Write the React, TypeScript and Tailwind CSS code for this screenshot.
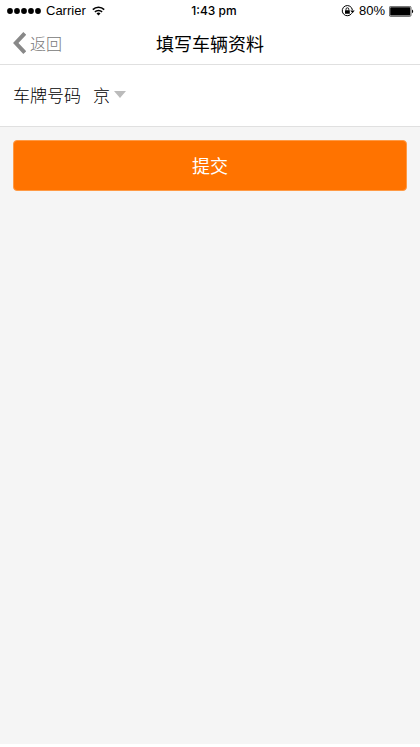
import { useState, type FormEvent } from "react";

const provinces = ["京", "津", "沪", "渝", "冀", "豫", "粤", "苏", "浙"];

const StatusBar = () => {
  return (
    <div className="grid h-[22px] grid-cols-3 items-center px-1.5 font-['Liberation_Sans',sans-serif] text-[13px] text-black">
      <div className="flex items-center">
        <svg width="36" height="8" viewBox="0 0 36 8" aria-hidden="true">
          {[4, 11, 18, 25, 32].map((cx) => (
            <circle key={cx} cx={cx} cy="4" r="2.9" />
          ))}
        </svg>
        <span className="ml-1">Carrier</span>
        <svg className="ml-1.5" width="13" height="10" viewBox="0 0 13 10" fill="none" stroke="#000" aria-hidden="true">
          <path d="M.8 3.6a8.1 8.1 0 0 1 11.4 0" strokeWidth="1.6" />
          <path d="M2.9 5.9a5.1 5.1 0 0 1 7.2 0" strokeWidth="1.5" />
          <path d="M6.5 9.6 4.5 7.5a2.9 2.9 0 0 1 4 0z" fill="#000" stroke="none" />
        </svg>
      </div>

      <span className="pl-2 text-center font-['Inter',sans-serif] text-xs font-medium">1:43 pm</span>

      <div className="flex items-center justify-end">
        <svg width="14" height="12" viewBox="0 0 14 12" fill="none" stroke="#000" aria-hidden="true">
          <path d="M10.7 8.3A5.1 5.1 0 1 1 11.4 5" strokeWidth="1" />
          <path d="M9.3 5.6h4.4l-2.2 2.7z" fill="#000" stroke="none" />
          <rect x="4" y="5.2" width="4.8" height="3.6" rx=".4" fill="#000" stroke="none" />
          <path d="M5 5.4V4.2a1.4 1.4 0 0 1 2.8 0v1.2" strokeWidth=".9" />
        </svg>
        <span className="ml-1">80%</span>
        <svg className="ml-1" width="25" height="11" viewBox="0 0 25 11" aria-hidden="true">
          <rect x=".4" y=".4" width="21.6" height="10" rx="1.2" fill="none" stroke="#000" strokeWidth=".6" />
          <rect x="1.2" y="1.2" width="20" height="8.4" rx=".6" />
          <path d="M23 3.6c1.6.4 1.6 3.2 0 3.6z" />
        </svg>
      </div>
    </div>
  );
};

const Header = () => {
  return (
    <header className="grid h-[43px] grid-cols-[1fr_auto_1fr] items-center border-b border-[#e0e0e0] px-[13px]">
      <button type="button" className="flex items-center gap-1 text-base font-light text-[#777]">
        <svg width="13" height="22" viewBox="0 0 13 22" fill="none" stroke="#888" strokeWidth="4" aria-hidden="true">
          <path d="M11.8 1.4 2.8 11l9 9.6" />
        </svg>
        返回
      </button>
      <h1 className="text-lg font-normal text-black">填写车辆资料</h1>
    </header>
  );
};

const App = () => {
  const [province, setProvince] = useState("京");

  const handleSubmit = (e: FormEvent) => {
    e.preventDefault();
  };

  return (
    <div className="bg-white pb-[3px] font-['Noto_Sans_CJK_SC',sans-serif]">
      <div className="flex min-h-[calc(100vh-3px)] flex-col bg-[#f5f5f5]">
        <div className="bg-white">
          <StatusBar />
          <Header />
        </div>

        <form onSubmit={handleSubmit}>
          <div className="flex h-[62px] items-center gap-3 border-b border-[#e0e0e0] bg-white px-[13px] pb-0.5 text-[17px] text-black">
            <label htmlFor="province" className="font-light">
              车牌号码
            </label>
            <div className="relative flex items-center">
              <select
                id="province"
                value={province}
                onChange={(e) => setProvince(e.target.value)}
                className="appearance-none bg-transparent pr-5 font-light outline-none"
              >
                {provinces.map((name) => (
                  <option key={name} value={name}>
                    {name}
                  </option>
                ))}
              </select>
              <svg className="pointer-events-none absolute right-1" width="12" height="7" viewBox="0 0 12 7" aria-hidden="true">
                <path d="M0 0h12L6 7z" fill="#bbb" />
              </svg>
            </div>
          </div>

          <div className="p-[13px]">
            <button
              type="submit"
              className="h-[51px] w-full rounded border border-[#ff9a45] bg-[#ff7300] pb-0.5 text-lg text-white"
            >
              提交
            </button>
          </div>
        </form>
      </div>
    </div>
  );
};

export default App;
